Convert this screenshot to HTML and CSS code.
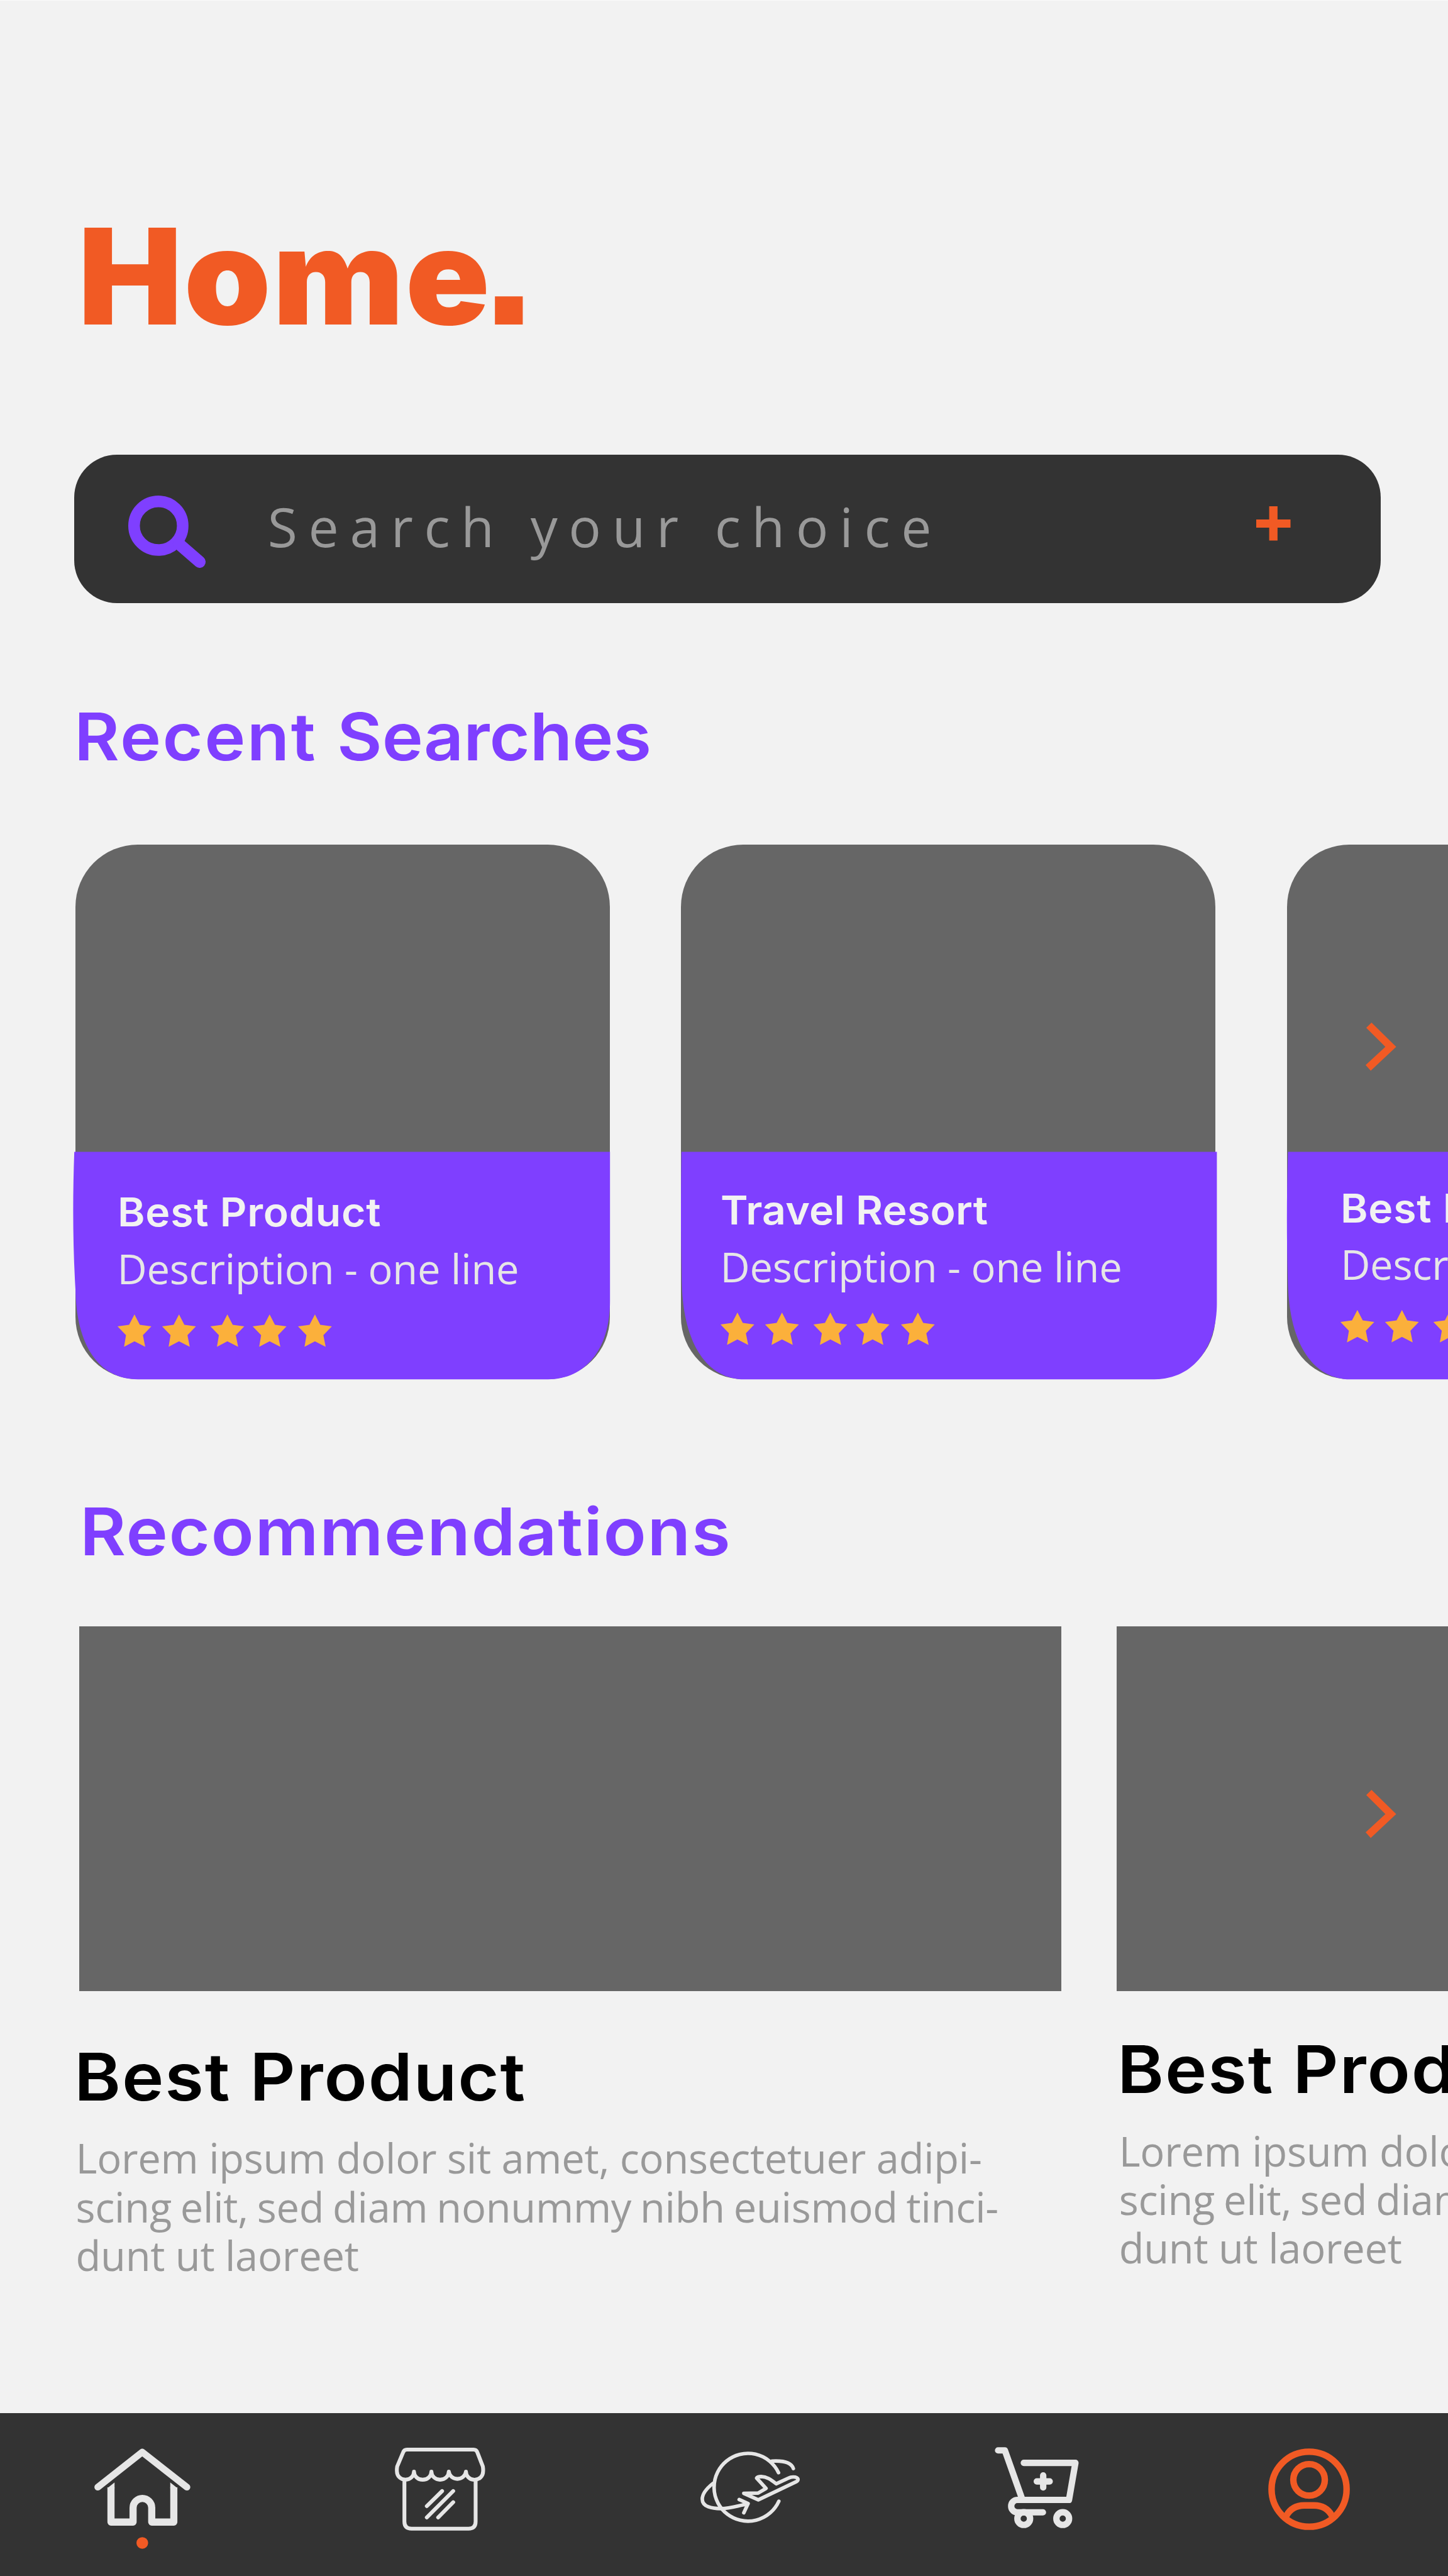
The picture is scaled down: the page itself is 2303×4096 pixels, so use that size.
FILE: index.html
```html
<!DOCTYPE html>
<html lang="en">
<head>
<meta charset="utf-8">
<title>Home</title>
<link rel="stylesheet" href="styles.css">
</head>
<body>
<svg class="defs" width="0" height="0" aria-hidden="true">
  <defs>
    <path id="star" d="M36.5 0L48 22.4L73 25.7L54.7 44.8L59.7 70L36.5 58L14 70L18.2 44.8L0 25.7L24.9 22.4Z"/>
    <g id="stars">
      <use href="#star"/><use href="#star" x="96.2"/><use href="#star" x="200.6"/><use href="#star" x="291.8"/><use href="#star" x="389.7"/>
    </g>
    <path id="chevron" d="M12.7 0L66 52.3L11 104L0 91.8L42.7 52.3L1.3 11.3Z"/>
  </defs>
</svg>
<div class="screen">
  <main class="content">
    <h1 class="title">Home<span class="title-dot">.</span></h1>

    <div class="search">
      <svg class="search-icon" viewBox="277 1069 168 157"><circle cx="342" cy="1134" r="52.5" fill="none" stroke-width="25"/><path d="M386 1173L431 1212" fill="none" stroke-width="26" stroke-linecap="round"/></svg>
      <span class="search-text">Search your choice</span>
      <svg class="plus" viewBox="0 0 74 74"><path d="M28 0H46V28.5H74V46H46V74H28V46H0V28.5H28Z"/></svg>
    </div>

    <h2 class="heading heading-recent"><span class="wide">Recent</span> Searches</h2>
    <section class="cards">
      <article class="card">
        <svg class="panel" viewBox="0 0 1154 1154"><path d="M-2.5 663C-6 760 -6 860 0 960C2 1080 50 1154 135 1154H1020C1100 1154 1154 1090 1154 985V663Z"/></svg>
        <div class="card-body">
          <h3 class="card-title">Best Product</h3>
          <p class="card-text">Description - one line</p>
          <svg class="rating" viewBox="0 0 463 70"><use href="#stars"/></svg>
        </div>
      </article>
      <article class="card">
        <svg class="panel" viewBox="0 0 1154 1154"><path d="M1 663C-.5 760 -.5 860 2 950C6 1080 58 1154 137 1154H1022C1110 1154 1157 1080 1157 990V663Z"/></svg>
        <div class="card-body card-body-travel">
          <h3 class="card-title">Travel Resort</h3>
          <p class="card-text">Description - one line</p>
          <svg class="rating" viewBox="0 0 463 70"><use href="#stars"/></svg>
        </div>
      </article>
      <article class="card">
        <svg class="panel" viewBox="0 0 1154 1154"><path d="M2 663C-1 760 -1 860 2 950C6 1080 58 1154 137 1154H1154V663Z"/></svg>
        <div class="card-body card-body-last">
          <h3 class="card-title">Best Product</h3>
          <p class="card-text">Description - one line</p>
          <svg class="rating" viewBox="0 0 463 70"><use href="#stars"/></svg>
        </div>
      </article>
      <svg class="next next-recent" viewBox="0 0 66 104"><use href="#chevron"/></svg>
    </section>

    <h2 class="heading heading-recommend">Recommendations</h2>
    <section class="offers">
      <article class="offer">
        <div class="offer-image"></div>
        <h3 class="offer-title">Best Product</h3>
        <p class="offer-text">Lorem ipsum dolor sit amet, consectetuer adipi-<br><span class="tight">scing elit, sed diam nonummy nibh euismod tinci-</span><br>dunt ut laoreet</p>
      </article>
      <article class="offer offer-next">
        <div class="offer-image"></div>
        <h3 class="offer-title">Best Product</h3>
        <p class="offer-text">Lorem ipsum dolor sit amet, consectetuer adipi-<br><span class="tight">scing elit, sed diam nonummy nibh euismod tinci-</span><br>dunt ut laoreet</p>
      </article>
      <svg class="next next-offer" viewBox="0 0 66 104"><use href="#chevron"/></svg>
    </section>
  </main>

  <nav class="tabs">
    <svg class="tab tab-home" viewBox="204 5280 208 220">
      <path class="line" stroke-width="14.6" d="M211.5 5366.5L307.5 5291L404 5366.5"/>
      <path class="line flat" stroke-width="15.4" d="M240 5367V5442H287.7V5411a20.1 20.1 0 0 1 40.3 0V5442H375.7V5367"/>
      <path fill="#e6e6e6" d="M232.3 5368.5L247.7 5356.5V5369H232.3ZM383.4 5368.5L368 5356.5V5369H383.4Z"/>
      <circle class="dot" cx="307.6" cy="5487" r="12.6"/>
    </svg>
    <svg class="tab tab-shop" viewBox="853 5280 196 181">
      <g class="line" stroke-width="8.3">
        <path d="M894.3 5333a18.4 17.5 0 0 1 -36.8 0Q857 5328 858 5322L871 5291Q873 5285.4 879 5285.4H1023Q1029 5285.4 1031 5291L1043 5322Q1044 5328 1043.5 5333a18.4 17.5 0 0 1 -37 0a18.6 17.5 0 0 1 -37 0a18.8 17.5 0 0 1 -37.6 0a18.8 17.5 0 0 1 -37.6 0"/>
        <path d="M873.6 5353V5441Q873.6 5456.2 889 5456.2H1012Q1027.4 5456.2 1027.4 5441V5353M955 5375L922 5407.5M979 5375L922 5432M979 5399L946.5 5432"/>
      </g>
    </svg>
    <svg class="tab tab-travel" viewBox="186 332 646 464">
      <g class="line" stroke-width="23">
        <path d="M692 469A219.5 219.5 0 1 0 694 654"/>
        <path d="M650 394C720 390 775 402 788 442M268 538C215 580 198 610 198 640C198 690 260 703 325 702C375 700 430 683 492 672M437 643L495 669L467 729"/>
        <path d="M561 645L806 528C824 518 822 504 800 498C785 495 768 498 755 505L677 541C640 511 615 495 580 494C562 494 553 498 550 504L611 571L560 601L467 603Z"/>
      </g>
    </svg>
    <svg class="tab tab-cart" viewBox="2148 5281 182 175">
      <g class="line" stroke-width="13.8">
        <path d="M2155.4 5288H2170L2208 5395M2211 5315H2322.4L2308.5 5395H2197A13.4 13.4 0 0 0 2197 5421.8H2252.2M2239 5355H2266.8M2252.8 5342V5368"/>
        <circle cx="2210.8" cy="5435.3" r="13.7"/><circle cx="2295" cy="5435.3" r="13.7"/>
      </g>
    </svg>
    <svg class="tab tab-user" viewBox="2738 5284 177 177">
      <g class="line" stroke-width="14">
        <circle cx="2826.3" cy="5372.3" r="81"/><circle cx="2826.3" cy="5352" r="34"/>
        <path d="M2777 5430C2785 5415 2799 5407.2 2816 5407.2H2837C2854 5407.2 2868 5415 2876 5430"/>
      </g>
    </svg>
  </nav>
</div>
</body>
</html>
```
FILE: styles.css
```css
* { box-sizing: border-box; margin: 0; padding: 0; }
body { background: #f2f2f2; }
svg { display: block; flex: none; overflow: visible; }
.defs { position: absolute; }

.screen {
  display: flex;
  flex-direction: column;
  width: 2303px;
  height: 4096px;
  overflow: hidden;
  background: #f2f2f2;
  border-top: 1px solid #fafafa;
  font-family: "Open Sans", "Noto Sans", sans-serif;
}
.content { height: 3836px; padding: 332px 0 0 118px; }

/* Display type is set slightly extended */
.title, .heading, .card-title, .offer-title {
  font-family: Inter, "Liberation Sans", sans-serif;
  white-space: nowrap;
  transform-origin: 0 50%;
}
.title { height: 212px; margin-left: 6px; font-size: 212px; line-height: 212px; font-weight: 900; letter-spacing: 2.3px; color: #f15a24; transform: scaleX(1.045); }
.title-dot { margin-left: -15px; font-family: "Liberation Sans", sans-serif; font-size: 300px; line-height: 0; font-weight: 700; }

.search {
  display: flex;
  align-items: flex-start;
  width: 2078px;
  height: 236px;
  margin-top: 177.5px;
  border-radius: 68px;
  background: #333;
}
.search-icon { width: 123.8px; height: 115.7px; margin: 65px 0 0 86px; stroke: #7f3fff; }
.search-text { margin: 71px 0 0 98px; font-size: 86px; line-height: 86px; letter-spacing: 17.6px; color: #999; white-space: nowrap; }
.plus { width: 54.5px; height: 54.5px; margin: 82px 144px 0 auto; fill: #f15a24; }

.heading { font-size: 105px; line-height: 105px; font-weight: 600; color: #7f3fff; }
.heading-recent { margin-top: 159px; letter-spacing: 0; word-spacing: 4px; transform: scaleX(1.05); }
.heading-recent .wide { letter-spacing: 2.3px; }
.heading-recommend { margin: 189px 0 0 8.5px; letter-spacing: 1.5px; transform: scaleX(1.07); }

.cards { position: relative; display: flex; gap: 113.4px; margin: 120px 0 0 1.5px; }
.card { display: grid; flex: none; width: 850.2px; height: 850.2px; border-radius: 99px; background: #666; }
.panel { grid-area: 1 / 1; width: 850.2px; height: 850.2px; fill: #7f3fff; }
.card-body { grid-area: 1 / 1; padding: 553.4px 0 0 67px; }
.card-body-travel { padding: 550.4px 0 0 62.5px; }
.card-body-last { padding: 547px 0 0 85.5px; }
.card-title { font-size: 63px; line-height: 63px; font-weight: 600; letter-spacing: .7px; color: #f2f2f2; transform: scaleX(1.05); }
.card-body-travel .card-title { letter-spacing: .25px; }
.card-text { margin-top: 25.8px; font-size: 65px; line-height: 65px; letter-spacing: -.2px; color: #e6e6e6; white-space: nowrap; }
.rating { width: 341px; height: 51.6px; margin-top: 40px; fill: #fbb03b; }

.next { position: absolute; width: 48.6px; height: 76.6px; fill: #f15a24; }
.next-recent { left: 2052.4px; top: 283.5px; }
.next-offer { left: 2046.5px; top: 260px; }

.offers { position: relative; display: flex; gap: 87.6px; margin: 99px 0 0 7.5px; }
.offer { flex: none; width: 1562.6px; }
.offer-image { height: 580.4px; background: #666; }
.offer-title { margin: 83px 0 0 -7.5px; font-size: 105px; line-height: 105px; font-weight: 600; letter-spacing: 1.7px; color: #000; transform: scaleX(1.07); }
.offer-text { margin: 39.3px 0 0 -5px; font-size: 65px; line-height: 77.3px; letter-spacing: -.25px; color: #999; white-space: nowrap; }
.offer-text .tight { word-spacing: -2.8px; }
.offer-next .offer-title { margin: 71.3px 0 0 1.5px; }
.offer-next .offer-text { margin-left: 4px; }

.tabs { display: flex; flex: none; height: 259px; padding-left: 150px; background: #333; }
.tab { margin-top: 53.5px; }
.tab .line { fill: none; stroke: #e6e6e6; stroke-linecap: round; stroke-linejoin: round; }
.tab .line.flat { stroke-linecap: butt; }
.dot { fill: #f15a24; }
.tab-home { width: 153.2px; height: 162px; }
.tab-shop { width: 144.4px; height: 133.3px; margin-left: 325px; }
.tab-travel { width: 158.6px; height: 114px; margin: 61px 0 0 341px; }
.tab-cart { width: 134px; height: 129px; margin-left: 310px; }
.tab-user { width: 130.4px; height: 130.4px; margin: 55.5px 0 0 301px; }
.tab-user .line { stroke: #f15a24; }
```
